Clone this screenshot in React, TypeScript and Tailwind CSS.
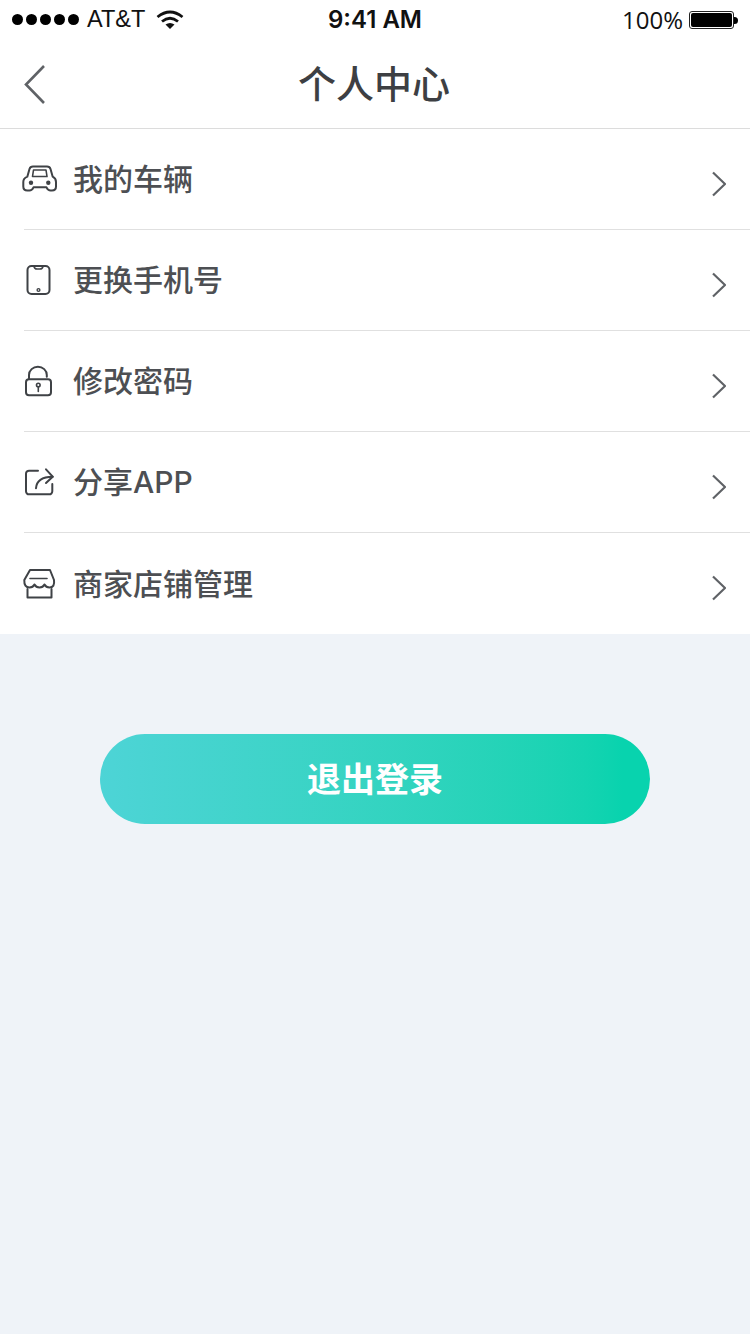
import type { ReactNode } from "react";

const stroke = {
  fill: "none",
  stroke: "#3f4246",
  strokeWidth: 2,
  strokeLinecap: "round" as const,
  strokeLinejoin: "round" as const,
};

function RowIcon({ children }: { children: ReactNode }) {
  return (
    <svg width="36" height="36" viewBox="0 0 36 36" className="-ml-[3px] shrink-0" {...stroke}>
      {children}
    </svg>
  );
}

const menu: { label: string; icon: ReactNode }[] = [
  {
    label: "我的车辆",
    icon: (
      <RowIcon>
        <path d="M6.3 15.7 L8.5 8 Q9.2 5.5 12 5.5 H26 Q28.8 5.5 29.5 8 L31.7 15.7 Q35 17.5 35 21 V25.5 Q35 29.5 31 29.5 H29.5 Q27 29.5 25.5 26.3 H12.5 Q11 29.5 8.5 29.5 H6.3 Q2.3 29.5 2.3 25.5 V21 Q2.3 17.5 6.3 15.7 Z" />
        <path d="M12.5 9 H25 L26 15.5 H11.5 Z" strokeWidth={1.6} />
        <circle cx="10" cy="21.8" r="2.2" fill="#3f4246" stroke="none" />
        <circle cx="27.3" cy="21.8" r="2.2" fill="#3f4246" stroke="none" />
      </RowIcon>
    ),
  },
  {
    label: "更换手机号",
    icon: (
      <RowIcon>
        <rect x="6.5" y="4" width="22" height="28" rx="4" />
        <path d="M13 4.5 Q13.5 7 16 7 H19 Q21.5 7 22 4.5" strokeWidth={1.6} />
        <circle cx="17.5" cy="28" r="1.4" strokeWidth={1.4} />
      </RowIcon>
    ),
  },
  {
    label: "修改密码",
    icon: (
      <RowIcon>
        <rect x="5" y="16.3" width="25" height="16" rx="3" />
        <path d="M8 15.5 V12 A8.9 8.3 0 0 1 25.8 12 V13.7" />
        <circle cx="17.3" cy="22" r="1.8" strokeWidth={1.6} />
        <path d="M17.3 24 V28.5" strokeWidth={1.6} />
      </RowIcon>
    ),
  },
  {
    label: "分享APP",
    icon: (
      <RowIcon>
        <path d="M17 6.7 H8 A3 3 0 0 0 5 9.7 V27.3 A3 3 0 0 0 8 30.3 H28.3 A3 3 0 0 0 31.3 27.3 V20" />
        <path d="M15 24.3 C15.5 17 21 12.7 31.7 12.7" />
        <path d="M25 5.3 L31.7 12.7 L25 19" />
      </RowIcon>
    ),
  },
  {
    label: "商家店铺管理",
    icon: (
      <RowIcon>
        <path d="M9 4 H29 L33 14 Q34 21.5 28.5 21.5 Q25 21.5 23.5 18.5 Q22 21.5 18.5 21.5 Q15 21.5 13.5 18.5 Q12 21.5 8.5 21.5 Q3 21.5 3.3 14 Z" />
        <path d="M9 12.5 H26" strokeWidth={1.6} />
        <path d="M6.5 23 V31.5 H30.5 V23" />
      </RowIcon>
    ),
  },
];

export default function App() {
  return (
    <div className="min-h-[1334px] bg-[#eff3f8] font-['Inter','Noto_Sans_CJK_SC',sans-serif]">
      {/* Status bar */}
      <div className="flex h-10 items-center justify-between bg-white pl-3 pr-3 text-2xl text-[#111]">
        <div className="flex w-[250px] items-center">
          <div className="flex gap-[3px]">
            {[0, 1, 2, 3, 4].map((i) => (
              <span key={i} className="h-[11px] w-[11px] rounded-full bg-black" />
            ))}
          </div>
          <span className="ml-2 font-['Liberation_Sans',sans-serif] text-[23.5px]">AT&amp;T</span>
          <svg width="28" height="20" viewBox="0 0 28 20" className="ml-[11px]" fill="none" stroke="#111" strokeWidth="2.8">
            <path d="M1.5 7 Q14 -3 26.5 7" />
            <path d="M6 11.5 Q14 5 22 11.5" />
            <path d="M14 19 L9.5 14.5 Q14 11.5 18.5 14.5 Z" fill="#111" stroke="none" />
          </svg>
        </div>
        <span className="font-semibold">9:41 AM</span>
        <div className="flex w-[250px] items-center justify-end">
          <span className="font-['Open_Sans',sans-serif]">100%</span>
          <div className="ml-[6px] flex items-center">
            <div className="h-[18px] w-[45px] rounded-[3px] border border-[#222] p-[1px]">
              <div className="h-full w-full rounded-[2px] bg-black" />
            </div>
            <div className="h-[7px] w-[4px] rounded-r-full bg-black" />
          </div>
        </div>
      </div>

      {/* Nav */}
      <div className="relative flex h-[89px] items-center justify-center border-b border-[#dcdcdc] bg-white">
        <svg width="24" height="42" viewBox="0 0 24 42" className="absolute left-[23px] top-[24px]" fill="none" stroke="#5f6266" strokeWidth="2.6">
          <path d="M21 2 L3 20.5 L21 39" />
        </svg>
        <h1 className="pr-[2px] text-[38px] font-medium text-[#3d3f43]">个人中心</h1>
      </div>

      {/* Menu */}
      <div className="bg-white pl-6">
        {menu.map((item, i) => (
          <div
            key={item.label}
            className={`flex h-[101px] items-center pr-6 ${i < menu.length - 1 ? "border-b border-[#e0e0e0]" : ""}`}
          >
            <div className="flex w-[49px] shrink-0 items-center">{item.icon}</div>
            <span className="flex-1 text-3xl font-medium text-[#4d4f53]">{item.label}</span>
            <svg width="16" height="26" viewBox="0 0 16 26" className="mt-[9px]" fill="none" stroke="#5f6266" strokeWidth="2.2">
              <path d="M3 1.5 L15 13 L3 24.5" />
            </svg>
          </div>
        ))}
      </div>

      {/* Logout */}
      <div className="flex justify-center pt-[100px]">
        <button className="flex h-[90px] w-[550px] items-center justify-center rounded-full bg-gradient-to-r from-[#4dd4d6] to-[#08d3ae] to-95% text-[34px] font-semibold text-white">
          退出登录
        </button>
      </div>
    </div>
  );
}
